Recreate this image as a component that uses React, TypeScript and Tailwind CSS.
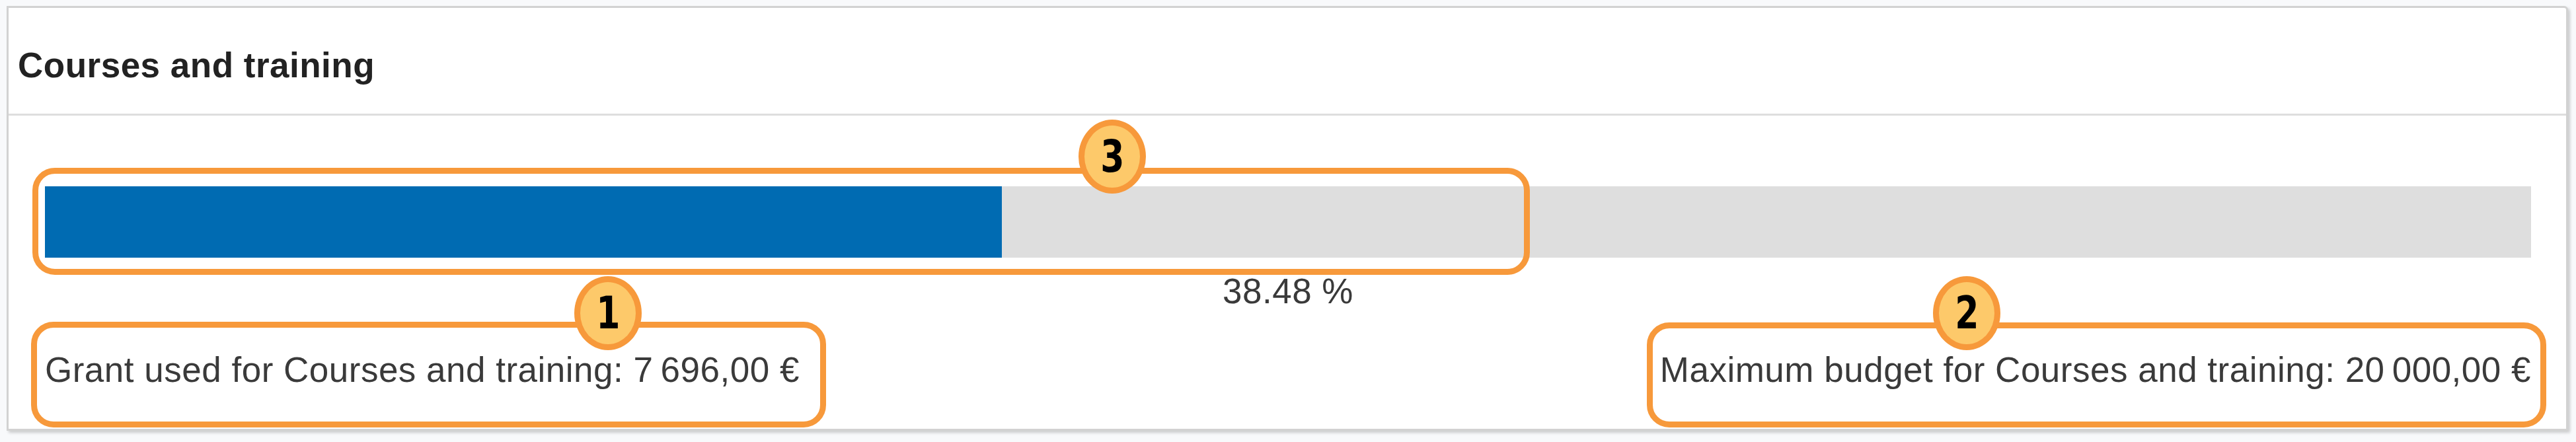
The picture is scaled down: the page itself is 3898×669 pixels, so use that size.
const used = 7696;
const budget = 20000;
const pct = (used / budget) * 100;

function fmt(n: number) {
  // 7 696,00 style
  const [int, dec] = n.toFixed(2).split(".");
  return `${int.replace(/\B(?=(\d{3})+(?!\d))/g, "\u2009")},${dec} €`;
}

// Numbered callout bubble (annotation overlay)
function Badge({ n, left, top }: { n: number; left: number; top: number }) {
  return (
    <div
      className="absolute w-[102px] h-[112px] rounded-[50%] bg-[#fdc96a] border-[9px] border-[#f7993b] flex items-center justify-center"
      style={{ left, top }}
    >
      <span className="text-[68px] leading-none font-bold text-black font-['Liberation_Sans_Narrow','DejaVu_Sans_Condensed','Liberation_Sans',sans-serif] scale-x-[0.85]">
        {n}
      </span>
    </div>
  );
}

function Frame({ left, top, width, height }: { left: number; top: number; width: number; height: number }) {
  return (
    <div
      className="absolute border-[9px] border-[#f7993b] rounded-[34px]"
      style={{ left, top, width, height }}
    />
  );
}

export default function App() {
  return (
    <div className="relative w-[3898px] h-[669px] bg-[#f8f9fb] pt-[9px] pl-[10px] font-['Liberation_Sans',Arial,sans-serif]">
      <div className="w-[3876px] h-[643px] bg-white border-[3px] border-[#d2d2d2] rounded-tr-[6px] shadow-[3px_3px_4px_rgba(0,0,0,0.18)] flex flex-col">
        <div className="h-[163px] pt-[57px] pl-[14px] border-b-[3px] border-[#dedede]">
          <h2 className="text-[53px] leading-[60px] tracking-[0.5px] font-bold text-[#222]">Courses and training</h2>
        </div>

        <div className="flex flex-col ml-[55px] w-[3762px]">
          <div className="mt-[107px] h-[108px] bg-[#dedede] flex">
            <div className="h-full bg-[#006bb2]" style={{ width: `${pct}%` }} />
          </div>
          <p className="mt-[21px] text-center text-[53px] leading-[60px] tracking-[0.5px] text-[#3a3a3a]">
            {pct.toFixed(2)} %
          </p>
          <div className="mt-[59px] flex justify-between text-[53px] leading-[60px] tracking-[0.5px] text-[#3a3a3a]">
            <span>Grant used for Courses and training: {fmt(used)}</span>
            <span>Maximum budget for Courses and training: {fmt(budget)}</span>
          </div>
        </div>
      </div>

      {/* annotation overlays */}
      <Frame left={49} top={254} width={2266} height={162} />
      <Frame left={47} top={487} width={1203} height={160} />
      <Frame left={2492} top={488} width={1361} height={159} />
      <Badge n={3} left={1632} top={181} />
      <Badge n={1} left={869} top={418} />
      <Badge n={2} left={2925} top={418} />
    </div>
  );
}
